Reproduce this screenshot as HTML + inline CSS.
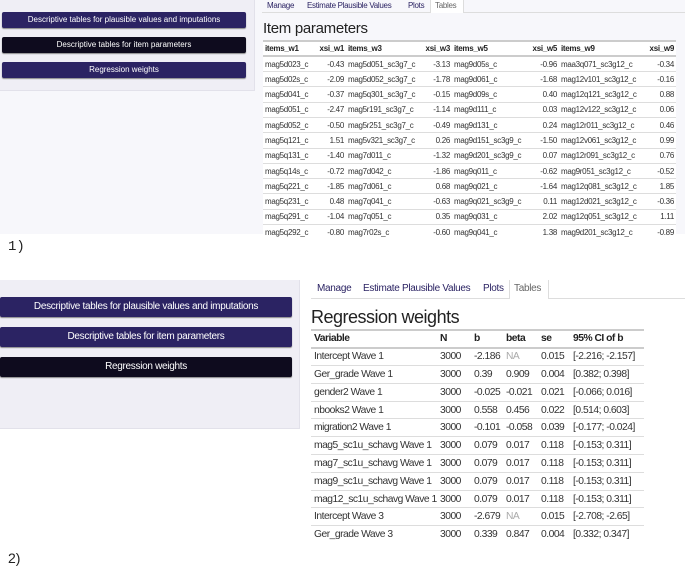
<!DOCTYPE html>
<html><head><style>
*{margin:0;padding:0;box-sizing:border-box}
body{width:685px;height:567px;background:#fff;font-family:"Liberation Sans",sans-serif;position:relative;overflow:hidden;color:#333}
.abs{position:absolute}
.btn{position:absolute;background:#2b2363;color:#fff;text-align:center;border-radius:2px;box-shadow:0 1px 1px #888;letter-spacing:-0.3px}
.btn.act{background:#0e0b1e}
.b1{letter-spacing:0}
.tab{position:absolute;color:#2b2363;letter-spacing:-0.3px}
table{border-collapse:collapse;position:absolute;background:#fff;table-layout:fixed}
td,th{white-space:nowrap;text-align:left;border-top:1px solid #ddd;overflow:hidden}
th{font-weight:bold;color:#222;border-top:2px solid #ccc;border-bottom:2px solid #ccc}
.r{text-align:right}
.t1 td,.t1 th{font-size:8px;height:15.3px;padding:0 2px;letter-spacing:-0.3px}
.t2 td,.t2 th{font-size:10.3px;height:17.8px;padding:0 3px;letter-spacing:-0.5px}
.na{color:#aaa}
</style></head><body>
<div class="abs" style="left:0;top:0;width:685px;height:234px;background:#f7f7fb"></div>
<div class="abs" style="left:0;top:0;width:255px;height:91px;background:#efeef5;border:1px solid #e2e1ea;border-left:none;border-top:none"></div>
<div class="btn b1" style="left:2px;top:12px;width:244px;height:16px;font-size:8px;line-height:16px">Descriptive tables for plausible values and imputations</div>
<div class="btn act b1" style="left:2px;top:37px;width:244px;height:16px;font-size:8px;line-height:16px">Descriptive tables for item parameters</div>
<div class="btn b1" style="left:2px;top:62px;width:244px;height:16px;font-size:8px;line-height:16px">Regression weights</div>
<div class="abs" style="left:262px;top:12px;width:423px;height:1px;background:#ddd"></div>
<div class="abs" style="left:430px;top:0;width:34px;height:13px;background:#fff;border:1px solid #ddd;border-top:none;border-bottom:none"></div>
<div class="tab" style="left:267px;top:1px;font-size:8px">Manage</div>
<div class="tab" style="left:307px;top:1px;font-size:8px">Estimate Plausible Values</div>
<div class="tab" style="left:408px;top:1px;font-size:8px">Plots</div>
<div class="tab" style="left:435px;top:1px;font-size:8px;color:#666">Tables</div>
<div class="abs" style="left:263px;top:20px;font-size:15px;color:#222;letter-spacing:-0.3px">Item parameters</div>
<table class="t1" style="left:263px;top:40px;width:413px">
<colgroup><col style="width:50px"><col style="width:33px"><col style="width:74px"><col style="width:32px"><col style="width:76px"><col style="width:31px"><col style="width:81px"><col style="width:36px"></colgroup>
<tr><th>items_w1</th><th class="r">xsi_w1</th><th>items_w3</th><th class="r">xsi_w3</th><th>items_w5</th><th class="r">xsi_w5</th><th>items_w9</th><th class="r">xsi_w9</th></tr>
<tr><td>mag5d023_c</td><td class="r">-0.43</td><td>mag5d051_sc3g7_c</td><td class="r">-3.13</td><td>mag9d05s_c</td><td class="r">-0.96</td><td>maa3q071_sc3g12_c</td><td class="r">-0.34</td></tr>
<tr><td>mag5d02s_c</td><td class="r">-2.09</td><td>mag5d052_sc3g7_c</td><td class="r">-1.78</td><td>mag9d061_c</td><td class="r">-1.68</td><td>mag12v101_sc3g12_c</td><td class="r">-0.16</td></tr>
<tr><td>mag5d041_c</td><td class="r">-0.37</td><td>mag5q301_sc3g7_c</td><td class="r">-0.15</td><td>mag9d09s_c</td><td class="r">0.40</td><td>mag12q121_sc3g12_c</td><td class="r">0.88</td></tr>
<tr><td>mag5d051_c</td><td class="r">-2.47</td><td>mag5r191_sc3g7_c</td><td class="r">-1.14</td><td>mag9d111_c</td><td class="r">0.03</td><td>mag12v122_sc3g12_c</td><td class="r">0.06</td></tr>
<tr><td>mag5d052_c</td><td class="r">-0.50</td><td>mag5r251_sc3g7_c</td><td class="r">-0.49</td><td>mag9d131_c</td><td class="r">0.24</td><td>mag12r011_sc3g12_c</td><td class="r">0.46</td></tr>
<tr><td>mag5q121_c</td><td class="r">1.51</td><td>mag5v321_sc3g7_c</td><td class="r">0.26</td><td>mag9d151_sc3g9_c</td><td class="r">-1.50</td><td>mag12v061_sc3g12_c</td><td class="r">0.99</td></tr>
<tr><td>mag5q131_c</td><td class="r">-1.40</td><td>mag7d011_c</td><td class="r">-1.32</td><td>mag9d201_sc3g9_c</td><td class="r">0.07</td><td>mag12r091_sc3g12_c</td><td class="r">0.76</td></tr>
<tr><td>mag5q14s_c</td><td class="r">-0.72</td><td>mag7d042_c</td><td class="r">-1.86</td><td>mag9q011_c</td><td class="r">-0.62</td><td>mag9r051_sc3g12_c</td><td class="r">-0.52</td></tr>
<tr><td>mag5q221_c</td><td class="r">-1.85</td><td>mag7d061_c</td><td class="r">0.68</td><td>mag9q021_c</td><td class="r">-1.64</td><td>mag12q081_sc3g12_c</td><td class="r">1.85</td></tr>
<tr><td>mag5q231_c</td><td class="r">0.48</td><td>mag7q041_c</td><td class="r">-0.63</td><td>mag9q021_sc3g9_c</td><td class="r">0.11</td><td>mag12d021_sc3g12_c</td><td class="r">-0.36</td></tr>
<tr><td>mag5q291_c</td><td class="r">-1.04</td><td>mag7q051_c</td><td class="r">0.35</td><td>mag9q031_c</td><td class="r">2.02</td><td>mag12q051_sc3g12_c</td><td class="r">1.11</td></tr>
<tr><td>mag5q292_c</td><td class="r">-0.80</td><td>mag7r02s_c</td><td class="r">-0.60</td><td>mag9q041_c</td><td class="r">1.38</td><td>mag9d201_sc3g12_c</td><td class="r">-0.89</td></tr>
</table>
<div class="abs" style="left:8px;top:239px;font-family:'Liberation Mono',monospace;font-size:14px;color:#222">1)</div>
<div class="abs" style="left:0;top:280px;width:685px;height:266px;background:#fff"></div>
<div class="abs" style="left:0;top:280px;width:300px;height:149px;background:#efeef5;border-right:1px solid #e2e1ea;border-bottom:1px solid #e2e1ea"></div>
<div class="btn" style="left:0;top:297px;width:292px;height:20px;font-size:10px;line-height:20px">Descriptive tables for plausible values and imputations</div>
<div class="btn" style="left:0;top:327px;width:292px;height:20px;font-size:10px;line-height:20px">Descriptive tables for item parameters</div>
<div class="btn act" style="left:0;top:357px;width:292px;height:20px;font-size:10px;line-height:20px">Regression weights</div>
<div class="abs" style="left:311px;top:298px;width:374px;height:1px;background:#ddd"></div>
<div class="abs" style="left:509px;top:280px;width:40px;height:19px;background:#fff;border:1px solid #ddd;border-top:none;border-bottom:none"></div>
<div class="tab" style="left:317px;top:283px;font-size:10px">Manage</div>
<div class="tab" style="left:363px;top:283px;font-size:10px">Estimate Plausible Values</div>
<div class="tab" style="left:483px;top:283px;font-size:10px">Plots</div>
<div class="tab" style="left:514px;top:283px;font-size:10px;color:#666">Tables</div>
<div class="abs" style="left:311px;top:307px;font-size:18px;color:#222;letter-spacing:-0.5px">Regression weights</div>
<table class="t2" style="left:311px;top:329px;width:333px">
<colgroup><col style="width:126px"><col style="width:34px"><col style="width:32px"><col style="width:35px"><col style="width:32px"><col style="width:74px"></colgroup>
<tr><th>Variable</th><th>N</th><th>b</th><th>beta</th><th>se</th><th>95% CI of b</th></tr>
<tr><td>Intercept Wave 1</td><td>3000</td><td>-2.186</td><td class="na">NA</td><td>0.015</td><td>[-2.216; -2.157]</td></tr>
<tr><td>Ger_grade Wave 1</td><td>3000</td><td>0.39</td><td>0.909</td><td>0.004</td><td>[0.382; 0.398]</td></tr>
<tr><td>gender2 Wave 1</td><td>3000</td><td>-0.025</td><td>-0.021</td><td>0.021</td><td>[-0.066; 0.016]</td></tr>
<tr><td>nbooks2 Wave 1</td><td>3000</td><td>0.558</td><td>0.456</td><td>0.022</td><td>[0.514; 0.603]</td></tr>
<tr><td>migration2 Wave 1</td><td>3000</td><td>-0.101</td><td>-0.058</td><td>0.039</td><td>[-0.177; -0.024]</td></tr>
<tr><td>mag5_sc1u_schavg Wave 1</td><td>3000</td><td>0.079</td><td>0.017</td><td>0.118</td><td>[-0.153; 0.311]</td></tr>
<tr><td>mag7_sc1u_schavg Wave 1</td><td>3000</td><td>0.079</td><td>0.017</td><td>0.118</td><td>[-0.153; 0.311]</td></tr>
<tr><td>mag9_sc1u_schavg Wave 1</td><td>3000</td><td>0.079</td><td>0.017</td><td>0.118</td><td>[-0.153; 0.311]</td></tr>
<tr><td>mag12_sc1u_schavg Wave 1</td><td>3000</td><td>0.079</td><td>0.017</td><td>0.118</td><td>[-0.153; 0.311]</td></tr>
<tr><td>Intercept Wave 3</td><td>3000</td><td>-2.679</td><td class="na">NA</td><td>0.015</td><td>[-2.708; -2.65]</td></tr>
<tr><td>Ger_grade Wave 3</td><td>3000</td><td>0.339</td><td>0.847</td><td>0.004</td><td>[0.332; 0.347]</td></tr>
</table>
<div class="abs" style="left:8px;top:550px;font-size:14px;color:#222">2)</div>
</body></html>
